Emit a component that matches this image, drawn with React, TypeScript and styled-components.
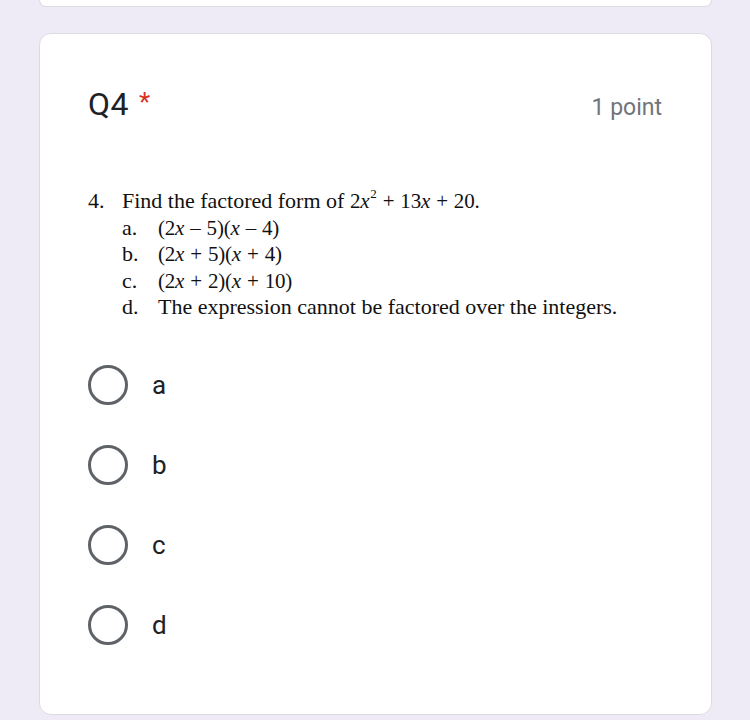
import styled, { createGlobalStyle } from 'styled-components';

const GlobalStyle = createGlobalStyle`
  body {
    margin: 0;
    background-color: #efebf6;
    font-family: Roboto, "Liberation Sans", Arial, sans-serif;
  }
`;

const Page = styled.div`
  display: flex;
  flex-direction: column;
  gap: 26px;
  padding: 0 38px 0 39px;
`;

const PrevCard = styled.div`
  height: 6px;
  background-color: #fff;
  border: 1px solid #dadce0;
  border-top: none;
  border-radius: 0 0 12px 12px;
`;

const Card = styled.section`
  box-sizing: border-box;
  height: 682px;
  background-color: #fff;
  border: 1px solid #dadce0;
  border-radius: 12px;
  padding: 51px 49px 0 48px;
`;

const Header = styled.div`
  display: flex;
  justify-content: space-between;
  align-items: baseline;
`;

const Title = styled.div`
  font-size: 32px;
  color: #202124;
  letter-spacing: 0.5px;
`;

const Required = styled.span`
  color: #d93025;
  margin-left: 10px;
  font-size: 26px;
  vertical-align: 4px;
`;

const Points = styled.div`
  font-size: 23px;
  color: #70757a;
`;

const Figure = styled.div`
  margin-top: 65px;
  font-family: "Liberation Serif", "Times New Roman", serif;
  font-size: 22px;
  line-height: 26.5px;
  color: #111;
`;

const Row = styled.div<{ $indent?: boolean }>`
  display: grid;
  grid-template-columns: ${p => (p.$indent ? '34px 36px 1fr' : '34px 1fr')};
`;

const Math = styled.span`
  font-size: 21px;
  letter-spacing: -0.2px;
  word-spacing: 1px;
`;

const Var = styled.i`
  font-style: italic;
`;

const Sup = styled.sup`
  font-size: 13px;
  line-height: 0;
  vertical-align: 10px;
  margin-left: 1px;
`;

const Options = styled.div`
  display: flex;
  flex-direction: column;
  margin-top: 24px;
`;

const Option = styled.label`
  display: flex;
  align-items: center;
  gap: 24px;
  height: 80px;
`;

const Radio = styled.span`
  box-sizing: border-box;
  width: 40px;
  height: 40px;
  border: 3.5px solid #5f6368;
  border-radius: 50%;
`;

const OptionText = styled.span`
  font-size: 26px;
  color: #202124;
`;

const choices = [
  { key: 'a', expr: <>(2<Var>x</Var> – 5)(<Var>x</Var> – 4)</> },
  { key: 'b', expr: <>(2<Var>x</Var> + 5)(<Var>x</Var> + 4)</> },
  { key: 'c', expr: <>(2<Var>x</Var> + 2)(<Var>x</Var> + 10)</> },
];

export default function App() {
  return (
    <>
      <GlobalStyle />
      <Page>
        <PrevCard />
        <Card>
          <Header>
            <Title>
              Q4<Required>*</Required>
            </Title>
            <Points>1 point</Points>
          </Header>
          <Figure>
            <Row>
              <span>4.</span>
              <span>
                Find the factored form of{' '}
                <Math>
                  2<Var>x</Var>
                  <Sup>2</Sup> + 13<Var>x</Var> + 20.
                </Math>
              </span>
            </Row>
            {choices.map(c => (
              <Row $indent key={c.key}>
                <span />
                <span>{c.key}.</span>
                <Math>{c.expr}</Math>
              </Row>
            ))}
            <Row $indent>
              <span />
              <span>d.</span>
              <span>The expression cannot be factored over the integers.</span>
            </Row>
          </Figure>
          <Options>
            {['a', 'b', 'c', 'd'].map(k => (
              <Option key={k}>
                <Radio />
                <OptionText>{k}</OptionText>
              </Option>
            ))}
          </Options>
        </Card>
      </Page>
    </>
  );
}
